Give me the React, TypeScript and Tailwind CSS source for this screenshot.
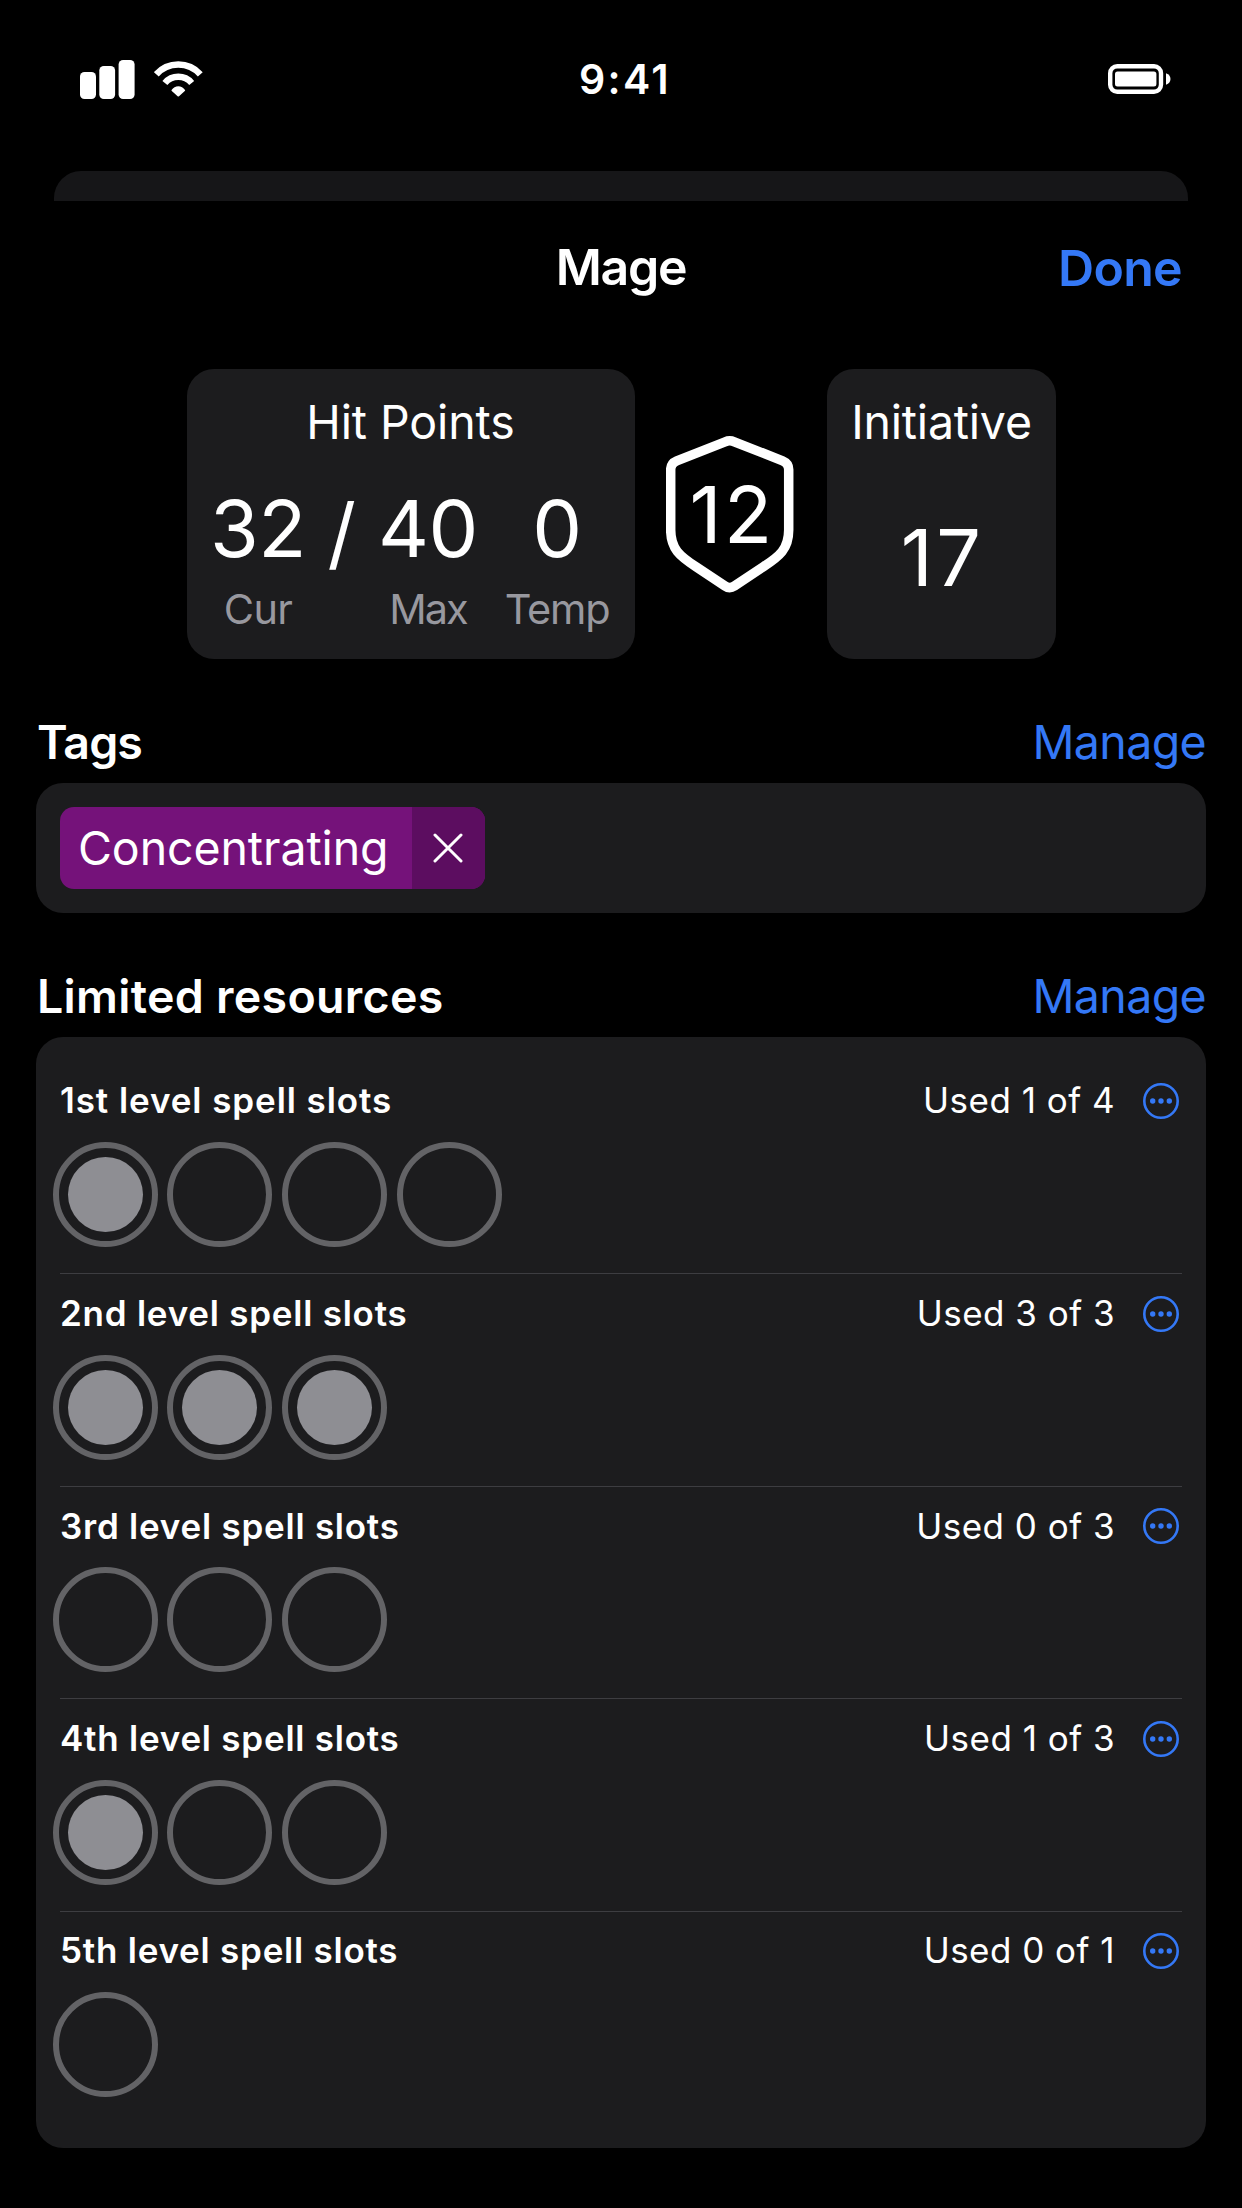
import React from "react";

type Resource = { name: string; used: number; total: number };

const resources: Resource[] = [
  { name: "1st level spell slots", used: 1, total: 4 },
  { name: "2nd level spell slots", used: 3, total: 3 },
  { name: "3rd level spell slots", used: 0, total: 3 },
  { name: "4th level spell slots", used: 1, total: 3 },
  { name: "5th level spell slots", used: 0, total: 1 },
];

function SignalIcon() {
  return (
    <svg className="block h-[39px] w-[55px]" viewBox="0 0 55 39" fill="currentColor">
      <rect x="0" y="12" width="16" height="27" rx="4.5" />
      <rect x="19.3" y="6" width="15.8" height="33" rx="4.5" />
      <rect x="38.6" y="0" width="16" height="39" rx="4.5" />
    </svg>
  );
}

function WifiIcon() {
  return (
    <svg className="block h-[36px] w-[49px]" viewBox="0 0 49 36" fill="none" stroke="currentColor" strokeWidth="6.5">
      <path d="M2.3 13.3A29.6 29.6 0 0 1 46.3 13.3" />
      <path d="M10.9 22A17.6 17.6 0 0 1 37.7 22" />
      <path d="M17.6 29C20.6 23.9 28 23.9 31 29Q31.4 29.6 30.8 30L25 35.3Q24.3 35.8 23.6 35.3L17.8 30Q17.2 29.6 17.6 29Z" fill="currentColor" stroke="none" />
    </svg>
  );
}

function BatteryIcon() {
  return (
    <svg className="block h-[30px] w-[63px]" viewBox="0 0 63 30">
      <rect x="2.2" y="2.2" width="50.8" height="25.6" rx="7" fill="none" stroke="currentColor" strokeWidth="4.4" />
      <rect x="7" y="7.4" width="41.4" height="15" rx="2.5" fill="currentColor" />
      <path d="M58 9.2Q62.5 11 62.5 15T58 20.8Z" fill="currentColor" />
    </svg>
  );
}

function MoreIcon() {
  return (
    <svg className="block size-[36px] text-[#3478f6]" viewBox="0 0 36 36">
      <circle cx="18" cy="18" r="16.7" fill="none" stroke="currentColor" strokeWidth="2.6" />
      <circle cx="9.7" cy="18" r="2.7" fill="currentColor" />
      <circle cx="18" cy="18" r="2.7" fill="currentColor" />
      <circle cx="26.3" cy="18" r="2.7" fill="currentColor" />
    </svg>
  );
}

function Shield({ value }: { value: number }) {
  return (
    <div className="relative mt-[67px] h-[158px] w-[128px]">
      <svg className="block h-[158px] w-[128px]" viewBox="0 0 128 158" fill="none" stroke="currentColor" strokeWidth="9.5">
        <path d="M59.1 5.8Q63.7 3.9 68.3 5.8L116.6 24.8Q122.7 27.4 122.7 33.5V94C122.7 113 113.4 120.3 97.4 130.7L68.4 150Q63.7 153.2 59 150L30 130.7C14 120.3 4.7 113 4.7 94V33.5Q4.7 27.4 10.8 24.8Z" />
      </svg>
      <div className="absolute inset-x-0 top-[28px] pl-[4px] text-center text-[79px] leading-[100px] tracking-[2.4px]">{value}</div>
    </div>
  );
}

function SectionHeading({ title }: { title: string }) {
  return (
    <div className="mt-[42px] flex h-[82px] items-center justify-between pt-[2px] pr-[36px] pl-[37px] text-[46.5px]">
      <h2 className={title === "Tags" ? "font-semibold tracking-[-0.93px]" : "font-semibold tracking-[0.3px]"}>{title}</h2>
      <button className="tracking-[-0.64px] text-[#3478f6]">Manage</button>
    </div>
  );
}

function Slot({ filled }: { filled: boolean }) {
  return (
    <div className="flex size-[105px] items-center justify-center rounded-full border-[6px] border-[#636366] first:-mr-px">
      {filled && <div className="size-[75px] rounded-full bg-[#8e8e93]" />}
    </div>
  );
}

function ResourceRow({ name, used, total, last }: Resource & { last: boolean }) {
  return (
    <div className={last ? "pt-[21.2px]" : "h-[212.67px] border-b border-[#3d3d41] pt-[21.67px]"}>
      <div className="flex h-[36px] items-center pr-[3px] text-[35px]">
        <h3 className={name.startsWith("1") ? "flex-1 pb-px font-semibold tracking-[0.92px]" : "flex-1 pb-px font-semibold tracking-[0.76px]"}>{name}</h3>
        <span className="mr-[28px] pb-px tracking-[0.47px]">
          Used {used} of {total}
        </span>
        <MoreIcon />
      </div>
      <div className="mt-[23px] -ml-[7px] flex gap-[10px]">
        {Array.from({ length: total }, (_, i) => (
          <Slot key={i} filled={i < used} />
        ))}
      </div>
    </div>
  );
}

export default function App() {
  return (
    <div className="h-[2208px] w-[1242px] overflow-hidden bg-black font-[Inter,sans-serif] text-white">
      <div className="grid h-[171px] grid-cols-3 pt-[58px]">
        <div className="flex h-[42px] items-center gap-[19px] pl-[80px]">
          <SignalIcon />
          <WifiIcon />
        </div>
        <div className="flex h-[42px] items-center justify-center pt-[2px] pl-[8px] text-[41px] font-semibold tracking-[2.3px]">9:41</div>
        <div className="flex h-[42px] items-center justify-end pr-[71px]">
          <BatteryIcon />
        </div>
      </div>

      <div className="mx-[54px] h-[30px] rounded-t-[27px] bg-[#161618]" />

      <header className="grid h-[132px] grid-cols-3 items-center text-[50px] font-semibold">
        <span />
        <h1 className="text-center tracking-[-1.33px]">Mage</h1>
        <button className="justify-self-end pt-[2px] pr-[60px] tracking-[-0.7px] text-[#3478f6]">Done</button>
      </header>

      <div className="mt-[36px] flex h-[290px] pl-[187px]">
        <div className="w-[448px] rounded-[27px] bg-[#1c1c1e] pl-[23px]">
          <div className="mt-[23px] -ml-[24px] text-center text-[46.5px] leading-[60px] tracking-[-0.1px]">Hit Points</div>
          <div className="mt-[26px] grid grid-cols-[96px_71px_102px_156px] text-center text-[79px] leading-[100px] tracking-[-0.5px]">
            <span>32</span>
            <span className="pt-[4px]">/</span>
            <span>40</span>
            <span>0</span>
          </div>
          <div className="grid grid-cols-[96px_71px_102px_156px] text-center text-[41.5px] leading-[54px] text-[#98989f]">
            <span className="tracking-[-0.7px]">Cur</span>
            <span />
            <span className="tracking-[-1.9px]">Max</span>
            <span className="tracking-[-1.2px]">Temp</span>
          </div>
        </div>
        <div className="w-[192px] pl-[31px]">
          <Shield value={12} />
        </div>
        <div className="w-[229px] rounded-[27px] bg-[#1c1c1e] text-center">
          <div className="mt-[23px] text-[46.5px] leading-[60px] tracking-[-0.2px]">Initiative</div>
          <div className="mt-[55px] pl-[2px] text-[79px] leading-[100px] tracking-[3.4px]">17</div>
        </div>
      </div>

      <SectionHeading title="Tags" />
      <div className="mx-[36px] h-[130px] rounded-[27px] bg-[#1c1c1e] p-[24px]">
        <div className="flex h-[82px] w-[425px] overflow-hidden rounded-[14px] bg-[#75127a]">
          <span className="flex w-[352px] items-center pt-[2px] pl-[18px] text-[46.5px] tracking-[-0.1px]">Concentrating</span>
          <button className="flex w-[73px] items-center justify-center bg-[#5c0d60] pr-px">
            <svg className="block size-[30px]" viewBox="0 0 30 30" stroke="currentColor" strokeWidth="3" strokeLinecap="round">
              <path d="M2 2L28 28M28 2L2 28" />
            </svg>
          </button>
        </div>
      </div>

      <SectionHeading title="Limited resources" />
      <div className="mx-[36px] h-[1111px] rounded-[27px] bg-[#1c1c1e] px-[24px] pt-[24.33px]">
        {resources.map((r, i) => (
          <ResourceRow key={r.name} {...r} last={i === resources.length - 1} />
        ))}
      </div>
    </div>
  );
}
